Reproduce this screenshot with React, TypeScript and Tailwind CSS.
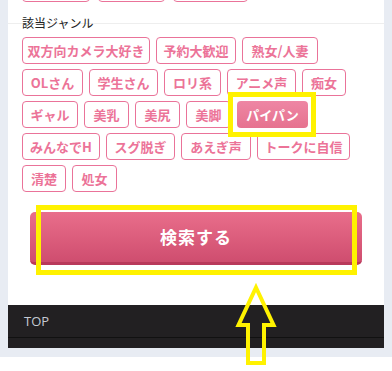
import React from "react";

const rows: { t: string; w: string; active?: boolean }[] = [
  { t: "双方向カメラ大好き", w: "w-[128px]" },
  { t: "予約大歓迎", w: "w-[80px]" },
  { t: "熟女/人妻", w: "w-[76px]" },
  { t: "OLさん", w: "w-[61px]" },
  { t: "学生さん", w: "w-[69px]" },
  { t: "ロリ系", w: "w-[57px]" },
  { t: "アニメ声", w: "w-[69px]" },
  { t: "痴女", w: "w-[44px]" },
  { t: "ギャル", w: "w-[56px]" },
  { t: "美乳", w: "w-[45px]" },
  { t: "美尻", w: "w-[45px]" },
  { t: "美脚", w: "w-[45px]" },
  { t: "パイパン", w: "w-[71px]", active: true },
  { t: "みんなでH", w: "w-[78px]" },
  { t: "スグ脱ぎ", w: "w-[69px]" },
  { t: "あえぎ声", w: "w-[70px]" },
  { t: "トークに自信", w: "w-[93px]" },
  { t: "清楚", w: "w-[44px]" },
  { t: "処女", w: "w-[45px]" },
];

export default function App() {
  return (
    <div
      className="relative w-[392px] h-[371px] bg-white overflow-hidden"
      style={{ fontFamily: '"Noto Sans CJK JP", "Noto Sans", sans-serif' }}
    >
      <div className="bg-[#e8ecf3] px-[8px] pb-[9px]">
        <div className="bg-white overflow-hidden">
          {/* previous row tags (cut off) */}
          <div className="flex pl-[14px] -mt-[25px]">
            <div className="w-[68px] h-[27px] border border-[#ea7399] rounded-[4px]" />
            <div className="w-[67px] h-[27px] border border-[#ea7399] rounded-[4px] ml-[8px]" />
            <div className="w-[75px] h-[27px] border border-[#ea7399] rounded-[4px] ml-[8px]" />
          </div>
          <div className="h-[22px] border-b border-[#eeeeee]" />
          <p className="-mt-[9px] pl-[14px] text-[12px] leading-[16px] text-[#222]">該当ジャンル</p>
          <div className="mt-[6px] pl-[14px] pr-[13px] flex flex-wrap gap-x-[6px] gap-y-[5px]">
            {rows.map((r) =>
              r.active ? (
                <div
                  key={r.t}
                  className={`${r.w} h-[27px] rounded-[4px] bg-gradient-to-b from-[#ee86a4] to-[#e6728f] text-white font-bold text-[13px] flex items-center justify-center`}
                >
                  {r.t}
                </div>
              ) : (
                <div
                  key={r.t}
                  className={`${r.w} h-[27px] rounded-[4px] border border-[#ea7399] text-[#ec7398] font-bold text-[13px] flex items-center justify-center`}
                >
                  {r.t}
                </div>
              )
            )}
          </div>
          <div className="mt-[20px] mb-[40px] mx-[22px]">
            <div className="h-[53px] rounded-[5px] bg-gradient-to-b from-[#e96e8b] to-[#cf4d6f] border-b-[3px] border-[#b9395b] flex items-center justify-center text-white font-bold text-[17px] tracking-[1px]">
              検索する
            </div>
          </div>
          <div className="bg-[#222022]">
            <div className="h-[33px] border-b border-[#111] flex items-center pl-[16px] pt-[2px]">
              <span className="text-[13px] text-[#c5cad3]" style={{ fontFamily: '"Open Sans", "Noto Sans", sans-serif' }}>
                TOP
              </span>
            </div>
            <div className="h-[10px]" />
          </div>
        </div>
      </div>

      {/* annotation overlays */}
      <div className="absolute left-[228px] top-[92px] w-[88px] h-[45px] border-[5px] border-[#fff200]" />
      <div className="absolute left-[36px] top-[205px] w-[321px] h-[70px] border-[5px] border-[#fff200]" />
      <svg className="absolute left-0 top-0" width="392" height="371" viewBox="0 0 392 371">
        <polygon
          points="256,287.5 273.5,325 264,325 264,363 248,363 248,325 238.5,325"
          fill="none"
          stroke="#fff200"
          strokeWidth="4"
          strokeLinejoin="miter"
        />
      </svg>
    </div>
  );
}
